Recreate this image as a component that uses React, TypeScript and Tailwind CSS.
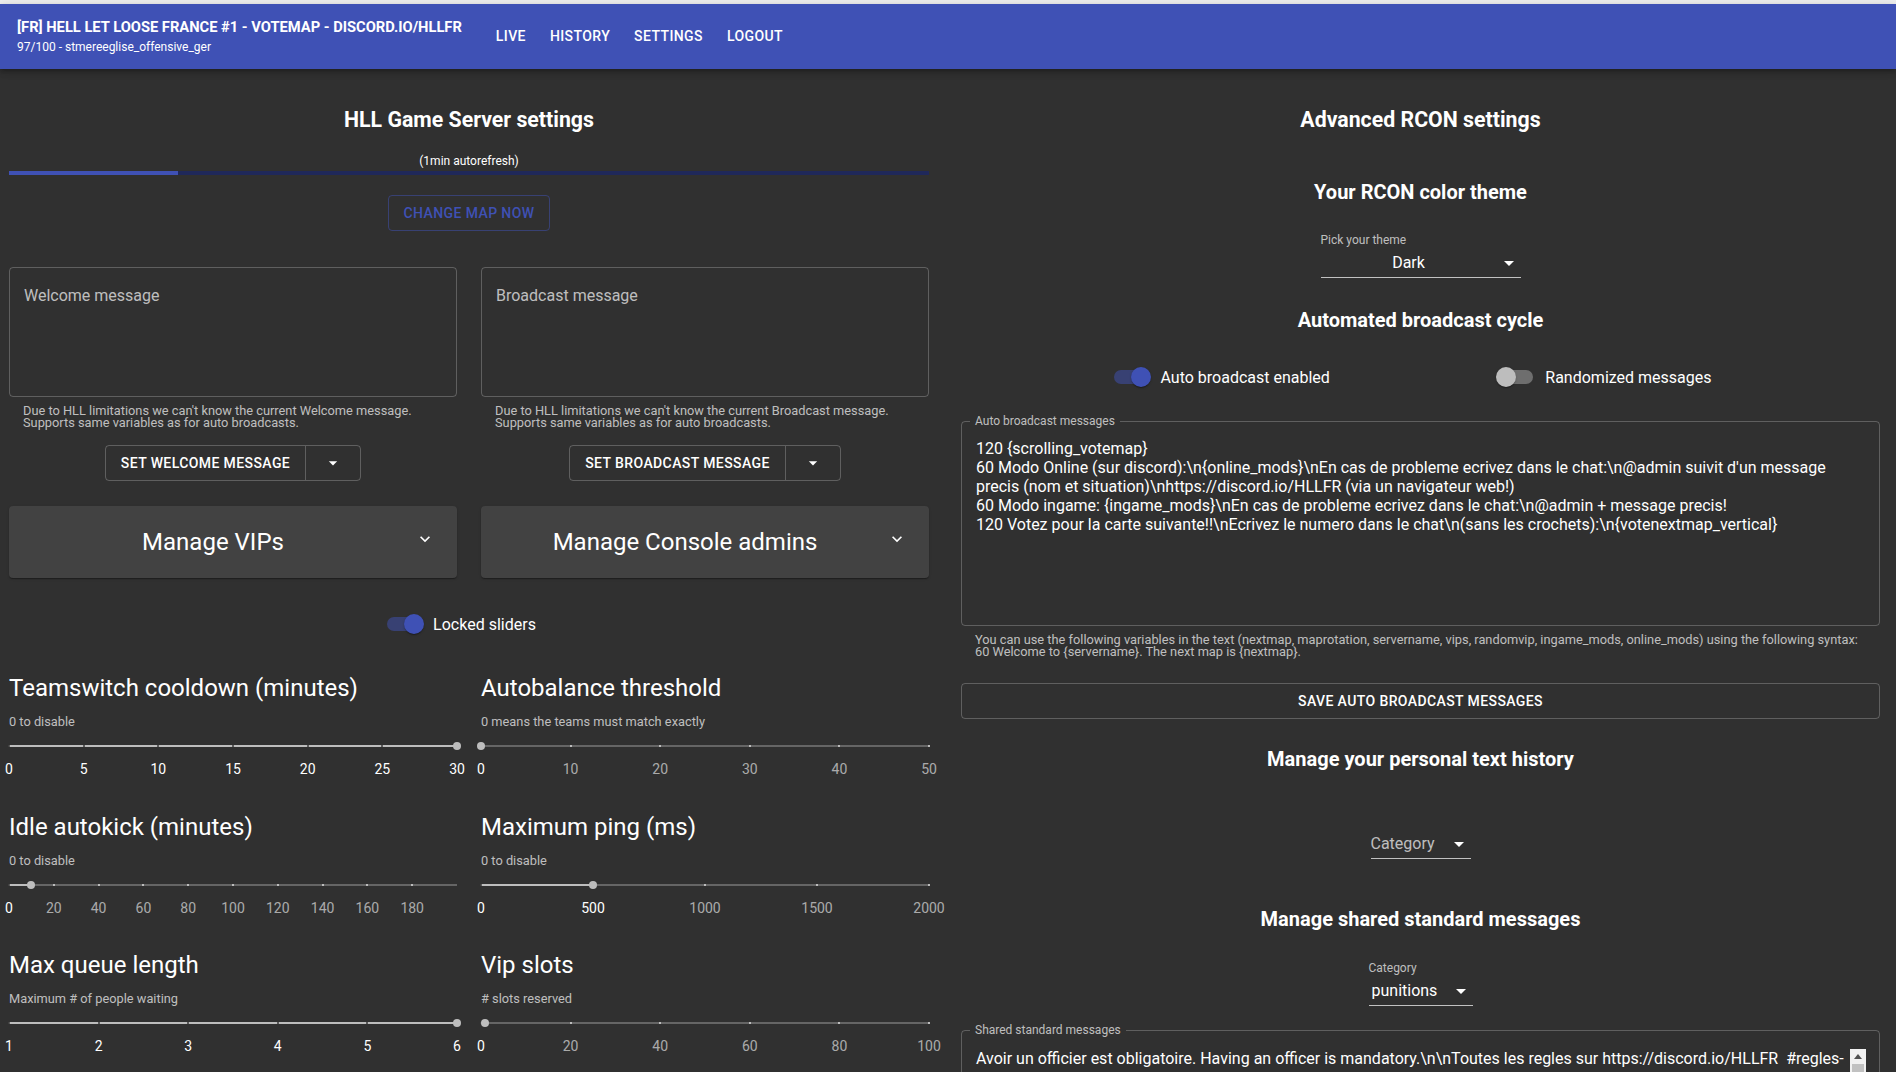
import React from "react";

const autoBroadcastText = [
    "120 {scrolling_votemap}",
    "60 Modo Online (sur discord):\\n{online_mods}\\nEn cas de probleme ecrivez dans le chat:\\n@admin suivit d'un message precis (nom et situation)\\nhttps://discord.io/HLLFR (via un navigateur web!)",
    "60 Modo ingame: {ingame_mods}\\nEn cas de probleme ecrivez dans le chat:\\n@admin + message precis!",
    "120 Votez pour la carte suivante!!\\nEcrivez le numero dans le chat\\n(sans les crochets):\\n{votenextmap_vertical}",
].join("\n");

const sharedText =
    "Avoir un officier est obligatoire. Having an officer is mandatory.\\n\\nToutes les regles sur https://discord.io/HLLFR  #regles-\nserveur";

const sliders = [
    { title: "Teamswitch cooldown (minutes)", sub: "0 to disable", min: 0, max: 30, value: 30, marks: [0, 5, 10, 15, 20, 25, 30] },
    { title: "Autobalance threshold", sub: "0 means the teams must match exactly", min: 0, max: 50, value: 0, marks: [0, 10, 20, 30, 40, 50] },
    { title: "Idle autokick (minutes)", sub: "0 to disable", min: 0, max: 200, value: 10, marks: [0, 20, 40, 60, 80, 100, 120, 140, 160, 180] },
    { title: "Maximum ping (ms)", sub: "0 to disable", min: 0, max: 2000, value: 500, marks: [0, 500, 1000, 1500, 2000] },
    { title: "Max queue length", sub: "Maximum # of people waiting", min: 1, max: 6, value: 6, marks: [1, 2, 3, 4, 5, 6] },
    { title: "Vip slots", sub: "# slots reserved", min: 0, max: 100, value: 1, marks: [0, 20, 40, 60, 80, 100] },
];

const DropArrow = ({ size = 24 }: { size?: number }) => (
    <svg width={size} height={size} viewBox="0 0 24 24" fill="currentColor">
        <path d="M7 10l5 5 5-5z" />
    </svg>
);

const ExpandMore = () => (
    <svg width={20} height={20} viewBox="0 0 24 24" fill="currentColor">
        <path d="M16.59 8.59L12 13.17 7.41 8.59 6 10l6 6 6-6z" />
    </svg>
);

const Switch = ({ on }: { on: boolean }) => (
    <span className="relative inline-block w-[58px] h-[38px] shrink-0">
        <span className={on ? "absolute left-[12px] top-[12px] w-[34px] h-[14px] rounded-full bg-[#3f51b5]/50" : "absolute left-[12px] top-[12px] w-[34px] h-[14px] rounded-full bg-white/30"} />
        <span
            className={
                on
                    ? "absolute top-[9px] left-[29px] w-[20px] h-[20px] rounded-full bg-[#3f51b5] shadow-[0_2px_1px_-1px_rgba(0,0,0,0.2),0_1px_1px_0_rgba(0,0,0,0.14),0_1px_3px_0_rgba(0,0,0,0.12)]"
                    : "absolute top-[9px] left-[9px] w-[20px] h-[20px] rounded-full bg-[#bdbdbd] shadow-[0_2px_1px_-1px_rgba(0,0,0,0.2),0_1px_1px_0_rgba(0,0,0,0.14),0_1px_3px_0_rgba(0,0,0,0.12)]"
            }
        />
    </span>
);

const SwitchLabel = ({ on, label }: { on: boolean; label: string }) => (
    <label className="flex items-center ml-[-11px] mr-[16px]">
        <Switch on={on} />
        <span className="text-[16px] leading-[19px] text-white">{label}</span>
    </label>
);

type SliderProps = { title: string; sub: string; min: number; max: number; value: number; marks: number[] };

const SliderBlock = ({ title, sub, min, max, value, marks }: SliderProps) => {
    const pos = (v: number) => ((v - min) / (max - min)) * 100;
    return (
        <div className="w-[448px] h-[138.5px]">
            <div className="text-[24px] leading-[32px] text-white">{title}</div>
            <div className="mt-[10px] text-[12.8px] leading-[16px] text-white/70">{sub}</div>
            <div className="relative h-[50px]">
                <div className="absolute left-0 right-0 top-[15px] h-[2px] bg-[#bdbdbd] opacity-[0.38]" />
                <div className="absolute left-0 top-[15px] h-[2px] bg-[#bdbdbd]" style={{ width: `${pos(value)}%` }} />
                {marks.map((m) => (
                    <span
                        key={m}
                        className={m <= value ? "absolute top-[15px] w-[2px] h-[2px] ml-[-1px] bg-[#424242]/80" : "absolute top-[15px] w-[2px] h-[2px] ml-[-1px] bg-[#bdbdbd]"}
                        style={{ left: `${pos(m)}%` }}
                    />
                ))}
                <span className="absolute top-[12px] w-[8px] h-[8px] ml-[-4px] rounded-full bg-[#bdbdbd]" style={{ left: `${pos(value)}%` }} />
                {marks.map((m) => (
                    <span
                        key={"l" + m}
                        className={m <= value ? "absolute top-[29px] -translate-x-1/2 text-[14px] leading-[20px] text-white" : "absolute top-[29px] -translate-x-1/2 text-[14px] leading-[20px] text-white/60"}
                        style={{ left: `${pos(m)}%` }}
                    >
                        {m}
                    </span>
                ))}
            </div>
        </div>
    );
};

const MessageBox = ({ label, kind, button }: { label: string; kind: string; button: string }) => (
    <div className="flex flex-col items-center">
        <div className="w-full h-[130px] border border-white/[0.23] rounded px-[14px] pt-[18px] text-[16px] leading-[19px] text-white/70">{label}</div>
        <div className="w-full mt-[8px] px-[14px] text-[12.8px] leading-[12px] text-white/70">
            Due to HLL limitations we can't know the current {kind} message.
            <br />
            Supports same variables as for auto broadcasts.
        </div>
        <div className="mt-[16px] flex h-[36px] border border-white/[0.23] rounded text-white text-[14px] font-medium tracking-[0.4px]">
            <span className="flex items-center px-[15px]">{button}</span>
            <span className="flex items-center justify-center w-[55px] border-l border-white/[0.23]">
                <DropArrow size={20} />
            </span>
        </div>
    </div>
);

const Accordion = ({ title }: { title: string }) => (
    <div className="flex items-center h-[72px] pl-[16px] bg-[#424242] rounded shadow-[0_2px_1px_-1px_rgba(0,0,0,0.2),0_1px_1px_0_rgba(0,0,0,0.14),0_1px_3px_0_rgba(0,0,0,0.12)]">
        <div className="flex-1 text-center text-[24px] leading-[32px] text-white">{title}</div>
        <div className="flex items-center justify-center w-[48px] mr-[8px] mt-[-6px] text-white">
            <ExpandMore />
        </div>
    </div>
);

export default function App() {
    return (
        <div className="h-[1072px] overflow-hidden bg-[#303030] text-white font-[Roboto,sans-serif]">
            <div className="h-[4px] bg-[#eeeeee]" />
            <header className="relative flex items-center h-[65px] pl-[17px] bg-[#3f51b5] shadow-[0_2px_4px_-1px_rgba(0,0,0,0.2),0_4px_5px_0_rgba(0,0,0,0.14),0_1px_10px_0_rgba(0,0,0,0.12)]">
                <div className="flex flex-col gap-[4px]">
                    <div className="text-[14.7px] leading-[17px] font-bold">[FR] HELL LET LOOSE FRANCE #1 - VOTEMAP - DISCORD.IO/HLLFR</div>
                    <div className="text-[12px] leading-[14px]">97/100 - stmereeglise_offensive_ger</div>
                </div>
                <nav className="flex gap-[24px] ml-[34px] text-[14px] font-medium tracking-[0.4px]">
                    <span>LIVE</span>
                    <span>HISTORY</span>
                    <span>SETTINGS</span>
                    <span>LOGOUT</span>
                </nav>
            </header>

            <main className="flex pl-[9px]">
                {/* left: game server */}
                <div className="w-[920px] flex flex-col items-center">
                    <h2 className="mt-[35px] text-[21.3px] leading-[32px] font-bold">HLL Game Server settings</h2>
                    <div className="mt-[17px] text-[12px] leading-[16px]">(1min autorefresh)</div>
                    <div className="mt-[2px] w-full h-[4px] bg-[#1f285a]">
                        <div className="h-full w-[169px] bg-[#3f51b5]" />
                    </div>
                    <button className="mt-[20px] h-[36px] px-[15px] border border-[#3f51b5]/50 rounded text-[#3f51b5] text-[14px] font-medium tracking-[0.4px]">
                        CHANGE MAP NOW
                    </button>
                    <div className="mt-[36px] w-full grid grid-cols-2 gap-x-[24px]">
                        <MessageBox label="Welcome message" kind="Welcome" button="SET WELCOME MESSAGE" />
                        <MessageBox label="Broadcast message" kind="Broadcast" button="SET BROADCAST MESSAGE" />
                    </div>
                    <div className="mt-[25px] w-full grid grid-cols-2 gap-x-[24px]">
                        <Accordion title="Manage VIPs" />
                        <Accordion title="Manage Console admins" />
                    </div>
                    <div className="mt-[27px]">
                        <SwitchLabel on={true} label="Locked sliders" />
                    </div>
                    <div className="mt-[29px] w-full grid grid-cols-2 gap-x-[24px]">
                        {sliders.map((s) => (
                            <SliderBlock key={s.title} {...s} />
                        ))}
                    </div>
                </div>

                {/* right: rcon settings */}
                <div className="ml-[32px] w-[919px] flex flex-col items-center">
                    <h2 className="mt-[35px] text-[21.3px] leading-[32px] font-bold">Advanced RCON settings</h2>
                    <h2 className="mt-[40px] text-[20px] leading-[32px] font-bold">Your RCON color theme</h2>
                    <div className="mt-[24px] w-[200px]">
                        <div className="text-[12px] leading-[16px] text-white/70">Pick your theme</div>
                        <div className="relative h-[30px] pt-[5px] pr-[24px] border-b border-white/70 text-center text-[16px] leading-[19px]">
                            Dark
                            <span className="absolute right-0 top-[3px] text-white">
                                <DropArrow />
                            </span>
                        </div>
                    </div>
                    <h2 className="mt-[26px] text-[20px] leading-[32px] font-bold">Automated broadcast cycle</h2>
                    <div className="mt-[22px] w-full flex justify-evenly">
                        <SwitchLabel on={true} label="Auto broadcast enabled" />
                        <SwitchLabel on={false} label="Randomized messages" />
                    </div>
                    <fieldset className="mt-[17px] w-full h-[213px] border border-white/[0.23] rounded min-w-0">
                        <legend className="ml-[8px] px-[5px] text-[12px] leading-[16px] text-white/70">Auto broadcast messages</legend>
                        <div className="px-[14px] pt-[10px] text-[16px] leading-[19px] whitespace-pre-wrap">{autoBroadcastText}</div>
                    </fieldset>
                    <div className="mt-[8px] w-full px-[14px] text-[12.8px] leading-[12px] text-white/70">
                        You can use the following variables in the text (nextmap, maprotation, servername, vips, randomvip, ingame_mods, online_mods) using the following syntax:
                        <br />
                        60 Welcome to {"{servername}"}. The next map is {"{nextmap}"}.
                    </div>
                    <button className="mt-[25px] w-full h-[36px] border border-white/[0.23] rounded text-white text-[14px] font-medium tracking-[0.4px]">
                        SAVE AUTO BROADCAST MESSAGES
                    </button>
                    <h2 className="mt-[24px] text-[20px] leading-[32px] font-bold">Manage your personal text history</h2>
                    <div className="relative mt-[54px] w-[100px] h-[30px] pt-[5px] border-b border-white/70 text-[16px] leading-[19px] text-white/70">
                        Category
                        <span className="absolute right-0 top-[3px] text-white">
                            <DropArrow />
                        </span>
                    </div>
                    <h2 className="mt-[44px] text-[20px] leading-[32px] font-bold">Manage shared standard messages</h2>
                    <div className="mt-[25px] w-[104px]">
                        <div className="text-[12px] leading-[16px] text-white/70">Category</div>
                        <div className="relative h-[30px] pt-[5px] pl-[3px] border-b border-white/70 text-[16px] leading-[19px]">
                            punitions
                            <span className="absolute right-0 top-[3px] text-white">
                                <DropArrow />
                            </span>
                        </div>
                    </div>
                    <fieldset className="relative mt-[16px] w-full h-[120px] border border-white/[0.23] rounded min-w-0">
                        <legend className="ml-[8px] px-[5px] text-[12px] leading-[16px] text-white/70">Shared standard messages</legend>
                        <div className="pl-[14px] pr-[31px] pt-[11px] text-[16px] leading-[19px] whitespace-pre-wrap">{sharedText}</div>
                        <div className="absolute right-[13px] top-[11px] w-[16px] h-[60px] bg-[#f1f1f1]">
                            <div className="flex items-center justify-center h-[15px] text-[#505050]">
                                <svg width={8} height={5} viewBox="0 0 8 5" fill="currentColor">
                                    <path d="M0 5 L4 0 L8 5 Z" />
                                </svg>
                            </div>
                            <div className="mx-[2px] h-[40px] bg-[#c1c1c1]" />
                        </div>
                    </fieldset>
                </div>
            </main>
        </div>
    );
}
